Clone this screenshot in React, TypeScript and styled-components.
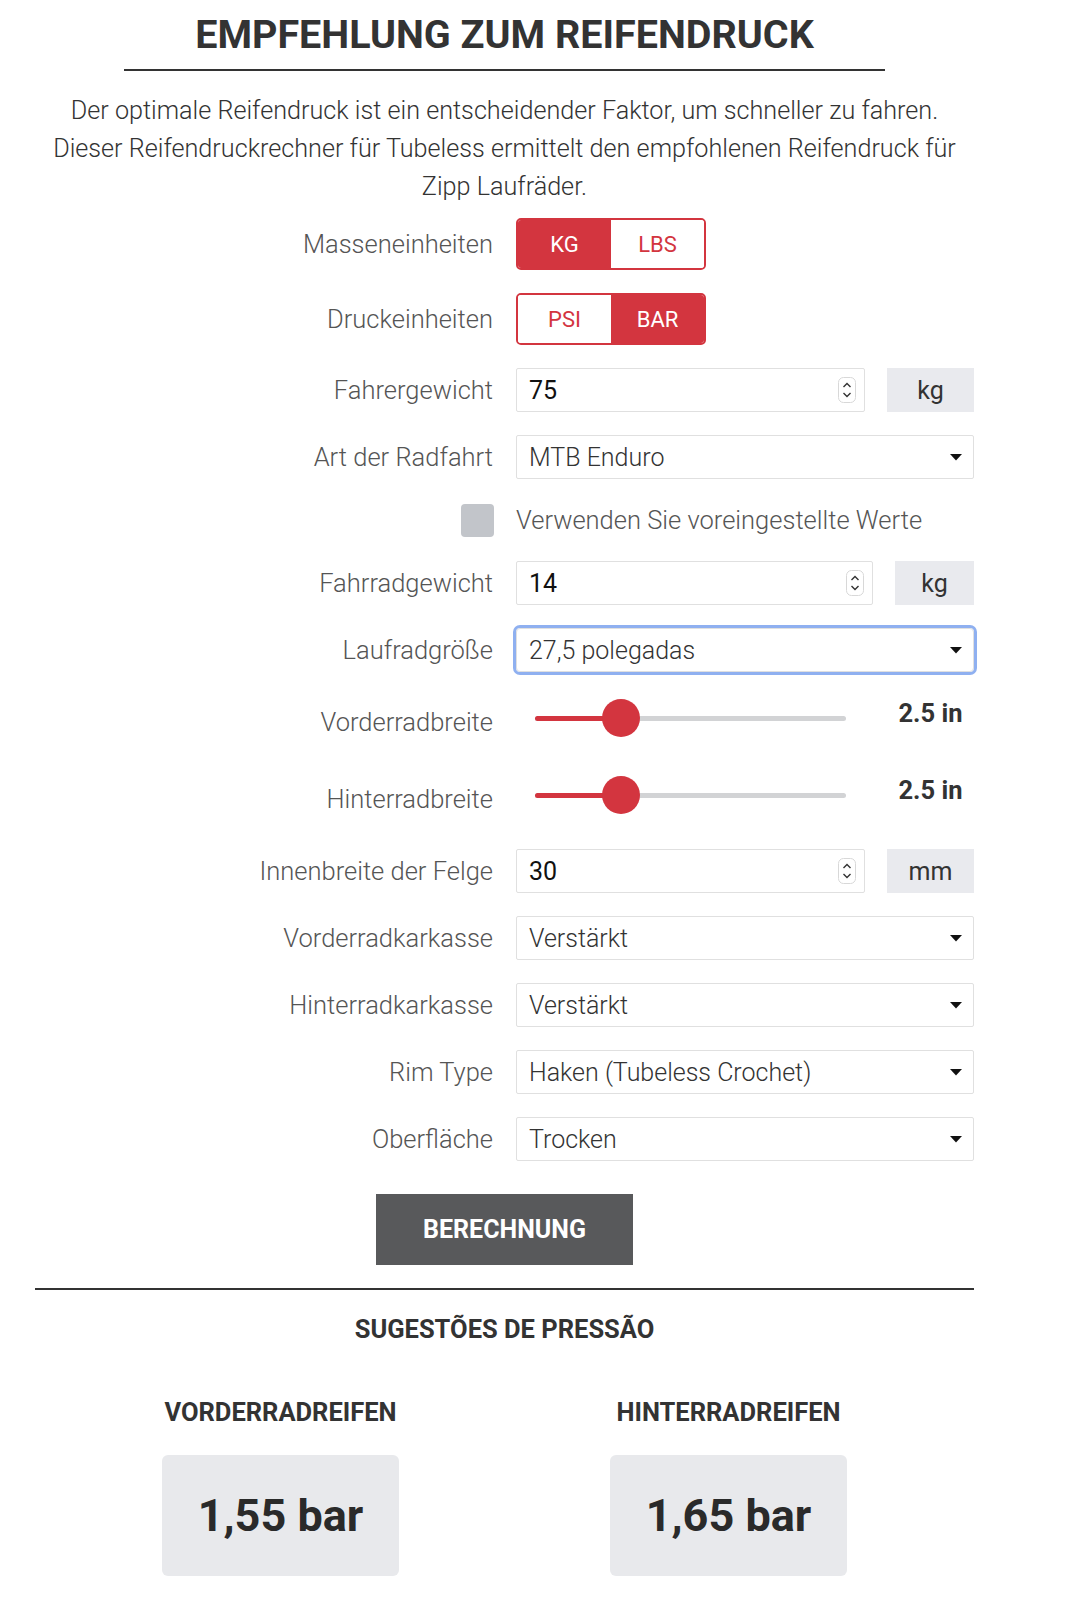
import React from 'react'
import styled, { createGlobalStyle } from 'styled-components'

const GlobalStyle = createGlobalStyle`
  body {
    margin: 0;
    background: #fff;
    font-family: Roboto, "Liberation Sans", sans-serif;
    color: #333;
  }
`

const RED = '#d3353f'

type Option = { label: string; value: string }

export default function App() {
  const massUnits: Option[] = [{ label: 'KG', value: 'kg' }, { label: 'LBS', value: 'lbs' }]
  const pressureUnits: Option[] = [{ label: 'PSI', value: 'psi' }, { label: 'BAR', value: 'bar' }]

  return (
    <>
      <GlobalStyle />
      <Page>
        <Title>EMPFEHLUNG ZUM REIFENDRUCK</Title>
        <TitleRule />
        <Intro>
          Der optimale Reifendruck ist ein entscheidender Faktor, um schneller zu fahren.<br />
          Dieser Reifendruckrechner für Tubeless ermittelt den empfohlenen Reifendruck für<br />
          Zipp Laufräder.
        </Intro>

        <Form>
          <Row $height={52}>
            <Label>Masseneinheiten</Label>
            <Toggle options={massUnits} active="kg" />
          </Row>
          <Row $height={52}>
            <Label>Druckeinheiten</Label>
            <Toggle options={pressureUnits} active="bar" />
          </Row>
          <Row>
            <Label>Fahrergewicht</Label>
            <NumberField value="75" unit="kg" unitWidth={87} />
          </Row>
          <Row>
            <Label>Art der Radfahrt</Label>
            <SelectField value="MTB Enduro" />
          </Row>
          <Row $height={36}>
            <CheckCell><CheckBox /></CheckCell>
            <CheckText>Verwenden Sie voreingestellte Werte</CheckText>
          </Row>
          <Row>
            <Label>Fahrradgewicht</Label>
            <NumberField value="14" unit="kg" unitWidth={79} />
          </Row>
          <Row>
            <Label>Laufradgröße</Label>
            <SelectField value="27,5 polegadas" focused />
          </Row>
          <Row $height={54}>
            <Label>Vorderradbreite</Label>
            <RangeField percent={27.7} value="2.5 in" />
          </Row>
          <Row $height={54}>
            <Label>Hinterradbreite</Label>
            <RangeField percent={27.7} value="2.5 in" />
          </Row>
          <Row>
            <Label>Innenbreite der Felge</Label>
            <NumberField value="30" unit="mm" unitWidth={87} />
          </Row>
          <Row>
            <Label>Vorderradkarkasse</Label>
            <SelectField value="Verstärkt" />
          </Row>
          <Row>
            <Label>Hinterradkarkasse</Label>
            <SelectField value="Verstärkt" />
          </Row>
          <Row>
            <Label>Rim Type</Label>
            <SelectField value="Haken (Tubeless Crochet)" />
          </Row>
          <Row>
            <Label>Oberfläche</Label>
            <SelectField value="Trocken" />
          </Row>
        </Form>

        <ButtonWrap>
          <CalcButton>BERECHNUNG</CalcButton>
        </ButtonWrap>

        <Divider />
        <SectionTitle>SUGESTÕES DE PRESSÃO</SectionTitle>

        <Results>
          <ResultCol>
            <ResultLabel>VORDERRADREIFEN</ResultLabel>
            <ResultBox>1,55 bar</ResultBox>
          </ResultCol>
          <ResultCol>
            <ResultLabel>HINTERRADREIFEN</ResultLabel>
            <ResultBox>1,65 bar</ResultBox>
          </ResultCol>
        </Results>
      </Page>
    </>
  )
}

function Toggle({ options, active }: { options: Option[]; active: string }) {
  return (
    <ToggleGroup>
      {options.map(o => (
        <ToggleButton key={o.value} $active={o.value === active}>{o.label}</ToggleButton>
      ))}
    </ToggleGroup>
  )
}

function NumberField({ value, unit, unitWidth }: { value: string; unit: string; unitWidth: number }) {
  return (
    <FieldLine>
      <InputBox>
        <span>{value}</span>
        <Spinner width="18" height="26" viewBox="0 0 18 26">
          <rect x="0.5" y="0.5" width="17" height="25" rx="5" fill="#fff" stroke="#d8d8d8" />
          <path d="M5.5 10 L9 6.5 L12.5 10" fill="none" stroke="#333" strokeWidth="1.4" />
          <path d="M5.5 16 L9 19.5 L12.5 16" fill="none" stroke="#333" strokeWidth="1.4" />
        </Spinner>
      </InputBox>
      <UnitBox $width={unitWidth}>{unit}</UnitBox>
    </FieldLine>
  )
}

function SelectField({ value, focused }: { value: string; focused?: boolean }) {
  return (
    <SelectBox $focused={focused}>
      <span>{value}</span>
      <svg width="12" height="7" viewBox="0 0 12 7">
        <path d="M0 0 H12 L6 6.5 Z" fill="#111" />
      </svg>
    </SelectBox>
  )
}

function RangeField({ percent, value }: { percent: number; value: string }) {
  return (
    <FieldLine>
      <SliderArea>
        <Track>
          <Fill style={{ width: `${percent}%` }} />
          <Thumb style={{ left: `${percent}%` }} />
        </Track>
      </SliderArea>
      <RangeValue>{value}</RangeValue>
    </FieldLine>
  )
}

const Page = styled.div`
  width: 939px;
  margin-left: 35px;
  padding-top: 12px;
  padding-bottom: 40px;
`

const Title = styled.h1`
  margin: 0;
  font-size: 39.5px;
  line-height: 46px;
  font-weight: 700;
  text-align: center;
  color: #333;
`

const TitleRule = styled.div`
  width: 761px;
  height: 2px;
  background: #333;
  margin: 11px auto 0;
`

const Intro = styled.p`
  margin: 21px 0 0;
  font-size: 25.2px;
  line-height: 38px;
  font-weight: 300;
  text-align: center;
  color: #333;
  white-space: nowrap;
`

const Form = styled.div`
  display: flex;
  flex-direction: column;
  gap: 23px;
  margin-top: 12px;
`

const Row = styled.div<{ $height?: number }>`
  display: grid;
  grid-template-columns: 458px 458px;
  column-gap: 23px;
  height: ${p => p.$height ?? 44}px;
  align-items: center;
`

const Label = styled.div`
  text-align: right;
  font-size: 25.5px;
  font-weight: 300;
  color: #555;
  white-space: nowrap;
`

const ToggleGroup = styled.div`
  display: flex;
  width: 190px;
  height: 52px;
  border: 2px solid ${RED};
  border-radius: 5px;
  overflow: hidden;
  box-sizing: border-box;
`

const ToggleButton = styled.div<{ $active: boolean }>`
  flex: 1;
  display: flex;
  align-items: center;
  justify-content: center;
  font-size: 22px;
  background: ${p => (p.$active ? RED : '#fff')};
  color: ${p => (p.$active ? '#fff' : RED)};
`

const FieldLine = styled.div`
  display: flex;
  align-items: center;
  gap: 22px;
  height: 100%;
`

const InputBox = styled.div`
  flex: 1;
  height: 44px;
  box-sizing: border-box;
  border: 1px solid #e0e0e0;
  border-radius: 2px;
  padding: 0 8px 0 12px;
  display: flex;
  align-items: center;
  justify-content: space-between;
  font-size: 25px;
  color: #111;
`

const Spinner = styled.svg`
  display: block;
`

const UnitBox = styled.div<{ $width: number }>`
  width: ${p => p.$width}px;
  height: 44px;
  background: #e9eaee;
  display: flex;
  align-items: center;
  justify-content: center;
  font-size: 25px;
  color: #333;
`

const SelectBox = styled.div<{ $focused?: boolean }>`
  height: 44px;
  box-sizing: border-box;
  border: 1px solid #e0e0e0;
  border-radius: ${p => (p.$focused ? '4px' : '2px')};
  padding: 0 11px 0 12px;
  display: flex;
  align-items: center;
  justify-content: space-between;
  font-size: 25px;
  font-weight: 300;
  color: #333;
  ${p => p.$focused && `
    outline: 3px solid #8fb0f0;
    outline-offset: 0;
  `}
`

const CheckCell = styled.div`
  display: flex;
  justify-content: flex-end;
`

const CheckBox = styled.div`
  width: 33px;
  height: 33px;
  border-radius: 4px;
  background: #c2c5ca;
  margin-right: -1px;
`

const CheckText = styled.div`
  font-size: 25.5px;
  font-weight: 300;
  color: #555;
  white-space: nowrap;
`

const SliderArea = styled.div`
  flex: 1;
  padding: 0 19px 8px;
`

const Track = styled.div`
  position: relative;
  height: 5px;
  border-radius: 3px;
  background: #d2d3d5;
`

const Fill = styled.div`
  height: 100%;
  border-radius: 3px;
  background: ${RED};
`

const Thumb = styled.div`
  position: absolute;
  top: 50%;
  width: 38px;
  height: 38px;
  border-radius: 50%;
  background: ${RED};
  transform: translate(-50%, -50%);
`

const RangeValue = styled.div`
  width: 87px;
  text-align: center;
  font-size: 25.5px;
  font-weight: 700;
  color: #333;
  padding-bottom: 18px;
`

const ButtonWrap = styled.div`
  display: flex;
  justify-content: center;
  margin-top: 33px;
`

const CalcButton = styled.button`
  width: 257px;
  height: 71px;
  border: none;
  border-radius: 0;
  background: #58595b;
  color: #fff;
  font-family: Roboto, "Liberation Sans", sans-serif;
  font-size: 25px;
  font-weight: 700;
  cursor: pointer;
`

const Divider = styled.hr`
  margin: 23px 0 0;
  border: none;
  height: 2px;
  background: #333;
`

const SectionTitle = styled.h3`
  margin: 24px 0 0;
  font-size: 25.5px;
  line-height: 30px;
  font-weight: 700;
  text-align: center;
  color: #333;
`

const Results = styled.div`
  display: grid;
  grid-template-columns: 448px 448px;
  justify-content: center;
  margin-top: 53px;
`

const ResultCol = styled.div`
  display: flex;
  flex-direction: column;
  align-items: center;
`

const ResultLabel = styled.div`
  font-size: 25.5px;
  line-height: 30px;
  font-weight: 700;
  color: #333;
`

const ResultBox = styled.div`
  margin-top: 28px;
  width: 237px;
  height: 121px;
  border-radius: 6px;
  background: #e8e9ec;
  display: flex;
  align-items: center;
  justify-content: center;
  font-size: 45px;
  font-weight: 700;
  color: #2a2a2a;
`
